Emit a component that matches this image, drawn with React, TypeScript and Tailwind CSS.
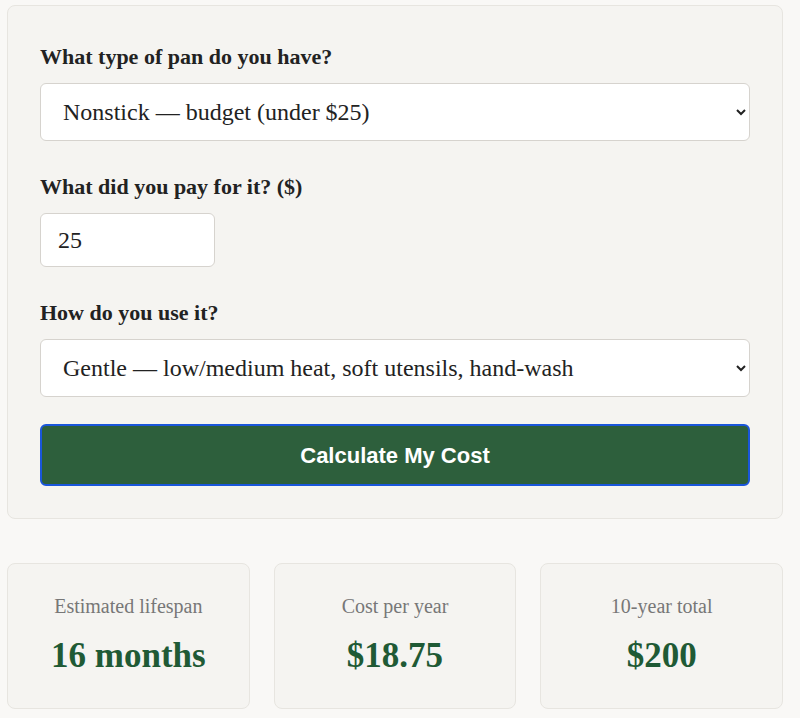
import React, { useState } from "react";

const pans = [
  "Nonstick — budget (under $25)",
  "Nonstick — premium ($25+)",
  "Ceramic nonstick",
  "Stainless steel",
  "Cast iron",
  "Carbon steel",
];

const usages = [
  "Gentle — low/medium heat, soft utensils, hand-wash",
  "Normal — everyday cooking, occasional dishwasher",
  "Rough — high heat, metal utensils, dishwasher",
];

function Field({ label, children }: { label: string; children: React.ReactNode }) {
  return (
    <div className="mb-[34px]">
      <label className="mb-[14px] block text-[22px] font-semibold leading-6 text-[#222]">{label}</label>
      {children}
    </div>
  );
}

function Result({ label, value }: { label: string; value: string }) {
  return (
    <div className="flex h-[146px] flex-col items-center rounded-lg border border-[#e7e5e0] bg-[#f5f4f1] pt-[30px]">
      <div className="text-[20px] leading-6 text-[#777]">{label}</div>
      <div className="mt-[18px] text-[35px] font-semibold leading-10 text-[#1f5a35]">{value}</div>
    </div>
  );
}

export default function App() {
  const [pan, setPan] = useState(pans[0]);
  const [price, setPrice] = useState("25");
  const [usage, setUsage] = useState(usages[0]);

  return (
    <div className="min-h-screen bg-[#f9f8f6] pl-[7px] pr-[17px] pt-[5px] font-['Liberation_Serif',serif] text-[#222]">
      <div className="rounded-lg border border-[#e7e5e0] bg-[#f5f4f1] px-8 pt-[39px] pb-8">
        <Field label="What type of pan do you have?">
          <select
            value={pan}
            onChange={(e) => setPan(e.target.value)}
            className="h-[58px] w-full rounded-md border border-[#d6d3ce] bg-white pl-[18px] pr-[12px] text-[24px]"
          >
            {pans.map((p) => (
              <option key={p}>{p}</option>
            ))}
          </select>
        </Field>

        <Field label="What did you pay for it? ($)">
          <input
            type="text"
            value={price}
            onChange={(e) => setPrice(e.target.value)}
            className="h-[54px] w-[175px] rounded-md border border-[#d6d3ce] bg-white px-[17px] text-[24px]"
          />
        </Field>

        <div>
          <label className="mb-[14px] block text-[22px] font-semibold leading-6 text-[#222]">How do you use it?</label>
          <select
            value={usage}
            onChange={(e) => setUsage(e.target.value)}
            className="h-[58px] w-full rounded-md border border-[#d6d3ce] bg-white pl-[18px] pr-[12px] text-[24px]"
          >
            {usages.map((u) => (
              <option key={u}>{u}</option>
            ))}
          </select>
        </div>

        <button className="mt-[27px] h-[62px] w-full rounded-md border-2 border-[#1a56db] bg-[#2d5f3c] font-['Liberation_Sans',Arial,sans-serif] text-[22px] font-bold text-white">
          Calculate My Cost
        </button>
      </div>

      <div className="mt-[44px] grid grid-cols-3 gap-6">
        <Result label="Estimated lifespan" value="16 months" />
        <Result label="Cost per year" value="$18.75" />
        <Result label="10-year total" value="$200" />
      </div>
    </div>
  );
}
